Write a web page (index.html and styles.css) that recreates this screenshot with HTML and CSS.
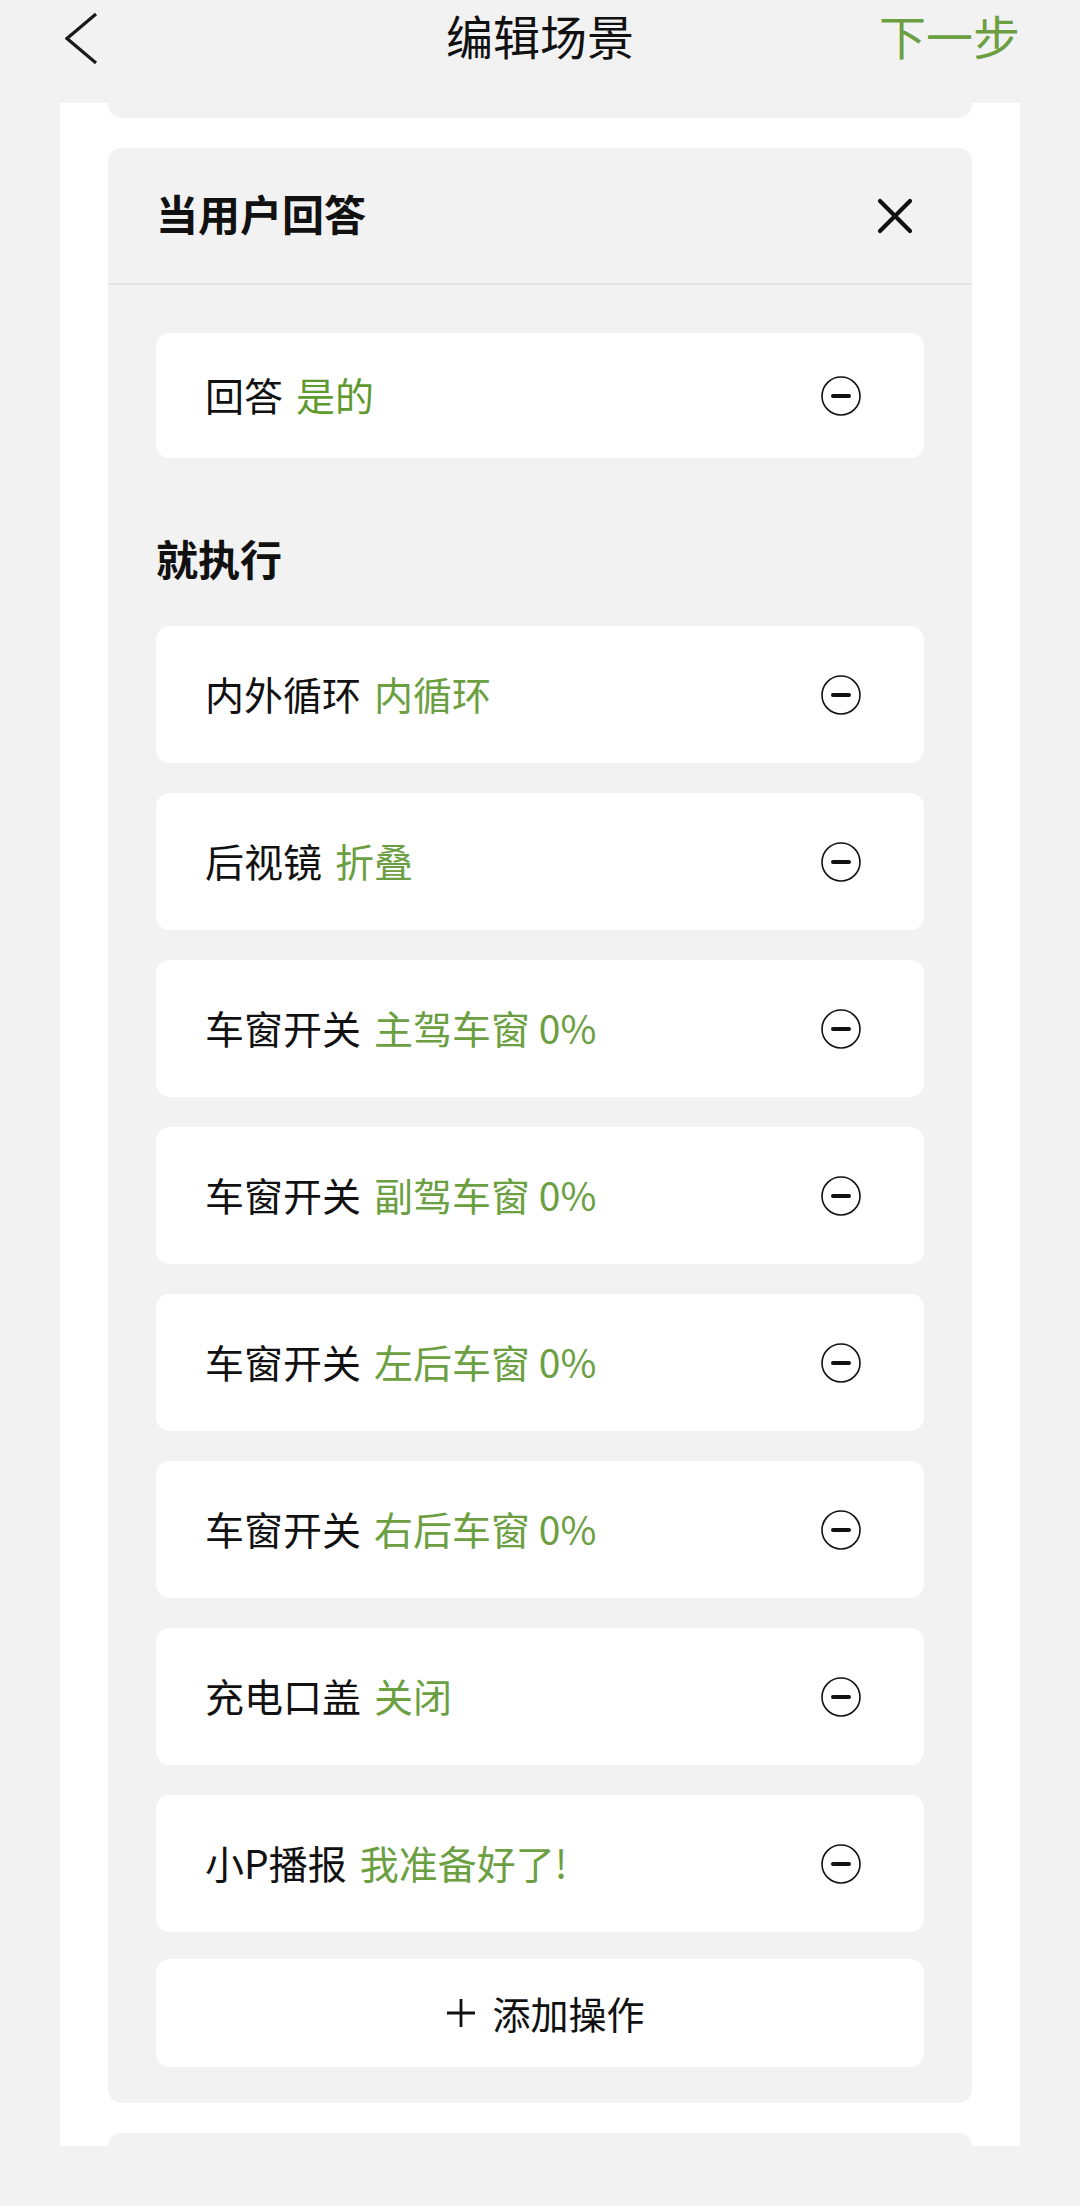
FILE: index.html
```html
<!DOCTYPE html>
<html lang="zh-CN">
<head>
<meta charset="utf-8">
<title>编辑场景</title>
<link rel="stylesheet" href="styles.css">
</head>
<body>
<div class="app">
  <header class="topbar">
    <button class="back" aria-label="返回">
      <svg width="34" height="52" viewBox="0 0 34 52"><polyline points="31,2 2,26.5 31,51" fill="none" stroke="#1a1a1a" stroke-width="3.2" stroke-linejoin="miter"/></svg>
    </button>
    <h1 class="title">编辑场景</h1>
    <a class="next">下一步</a>
  </header>

  <main class="sheet">
    <div class="stub stub-top"></div>

    <section class="scene-card">
      <div class="scene-head">
        <h2 class="scene-title">当用户回答</h2>
        <button class="close" aria-label="关闭">
          <svg width="36" height="36" viewBox="0 0 36 36"><path d="M3 3 L33 33 M33 3 L3 33" stroke="#111" stroke-width="4.2" stroke-linecap="round" fill="none"/></svg>
        </button>
      </div>

      <div class="scene-body">
        <div class="item item-answer">
          <span class="label">回答<span class="value">是的</span></span>
          <svg class="minus" width="40" height="40" viewBox="0 0 40 40"><circle cx="20" cy="20" r="19" fill="none" stroke="#111" stroke-width="1.6"/><line x1="12" y1="20" x2="28" y2="20" stroke="#111" stroke-width="4" stroke-linecap="round"/></svg>
        </div>

        <h3 class="section-title">就执行</h3>

        <div class="actions">
          <div class="item">
            <span class="label">内外循环<span class="value">内循环</span></span>
            <svg class="minus" width="40" height="40" viewBox="0 0 40 40"><circle cx="20" cy="20" r="19" fill="none" stroke="#111" stroke-width="1.6"/><line x1="12" y1="20" x2="28" y2="20" stroke="#111" stroke-width="4" stroke-linecap="round"/></svg>
          </div>
          <div class="item">
            <span class="label">后视镜<span class="value">折叠</span></span>
            <svg class="minus" width="40" height="40" viewBox="0 0 40 40"><circle cx="20" cy="20" r="19" fill="none" stroke="#111" stroke-width="1.6"/><line x1="12" y1="20" x2="28" y2="20" stroke="#111" stroke-width="4" stroke-linecap="round"/></svg>
          </div>
          <div class="item">
            <span class="label">车窗开关<span class="value">主驾车窗 0%</span></span>
            <svg class="minus" width="40" height="40" viewBox="0 0 40 40"><circle cx="20" cy="20" r="19" fill="none" stroke="#111" stroke-width="1.6"/><line x1="12" y1="20" x2="28" y2="20" stroke="#111" stroke-width="4" stroke-linecap="round"/></svg>
          </div>
          <div class="item">
            <span class="label">车窗开关<span class="value">副驾车窗 0%</span></span>
            <svg class="minus" width="40" height="40" viewBox="0 0 40 40"><circle cx="20" cy="20" r="19" fill="none" stroke="#111" stroke-width="1.6"/><line x1="12" y1="20" x2="28" y2="20" stroke="#111" stroke-width="4" stroke-linecap="round"/></svg>
          </div>
          <div class="item">
            <span class="label">车窗开关<span class="value">左后车窗 0%</span></span>
            <svg class="minus" width="40" height="40" viewBox="0 0 40 40"><circle cx="20" cy="20" r="19" fill="none" stroke="#111" stroke-width="1.6"/><line x1="12" y1="20" x2="28" y2="20" stroke="#111" stroke-width="4" stroke-linecap="round"/></svg>
          </div>
          <div class="item">
            <span class="label">车窗开关<span class="value">右后车窗 0%</span></span>
            <svg class="minus" width="40" height="40" viewBox="0 0 40 40"><circle cx="20" cy="20" r="19" fill="none" stroke="#111" stroke-width="1.6"/><line x1="12" y1="20" x2="28" y2="20" stroke="#111" stroke-width="4" stroke-linecap="round"/></svg>
          </div>
          <div class="item">
            <span class="label">充电口盖<span class="value">关闭</span></span>
            <svg class="minus" width="40" height="40" viewBox="0 0 40 40"><circle cx="20" cy="20" r="19" fill="none" stroke="#111" stroke-width="1.6"/><line x1="12" y1="20" x2="28" y2="20" stroke="#111" stroke-width="4" stroke-linecap="round"/></svg>
          </div>
          <div class="item">
            <span class="label">小P播报<span class="value">我准备好了!</span></span>
            <svg class="minus" width="40" height="40" viewBox="0 0 40 40"><circle cx="20" cy="20" r="19" fill="none" stroke="#111" stroke-width="1.6"/><line x1="12" y1="20" x2="28" y2="20" stroke="#111" stroke-width="4" stroke-linecap="round"/></svg>
          </div>
        </div>

        <button class="add">
          <svg width="28" height="28" viewBox="0 0 28 28"><path d="M14 0 V28 M0 14 H28" stroke="#111" stroke-width="2.8" fill="none"/></svg>
          <span>添加操作</span>
        </button>
      </div>
    </section>

    <div class="stub stub-bottom"></div>
  </main>
</div>
</body>
</html>
```

FILE: styles.css
```css
* { box-sizing: border-box; }

html, body {
  margin: 0;
  padding: 0;
}

body {
  background: #f2f2f2;
  font-family: "Noto Sans CJK SC", "Noto Sans", sans-serif;
  color: #111;
  width: 1080px;
  height: 2206px;
  overflow: hidden;
}

.app {
  width: 1080px;
}

/* ---------- top bar ---------- */
.topbar {
  height: 103px;
  display: grid;
  grid-template-columns: 1fr auto 1fr;
  align-items: start;
}

.back {
  justify-self: start;
  margin: 12px 0 0 65px;
  padding: 0;
  border: 0;
  background: none;
  display: flex;
}

.title {
  margin: 0;
  font-size: 47px;
  font-weight: 400;
  line-height: 70px;
  color: #111;
}

.next {
  justify-self: end;
  margin-right: 60px;
  font-size: 47px;
  line-height: 70px;
  color: #6b9f42;
}

/* ---------- white sheet ---------- */
.sheet {
  margin: 0 60px;
  background: #fff;
  padding: 0 48px;
  overflow: hidden;
}

.stub {
  background: #f2f2f2;
}

.stub-top {
  height: 15px;
  border-radius: 0 0 14px 14px;
}

.stub-bottom {
  height: 13px;
  margin-top: 30px;
  border-radius: 14px 14px 0 0;
}

/* ---------- scene card ---------- */
.scene-card {
  margin-top: 30px;
  background: #f2f2f2;
  border-radius: 14px;
}

.scene-head {
  height: 137px;
  display: flex;
  align-items: center;
  justify-content: space-between;
  padding: 0 59px 0 48px;
  border-bottom: 2px solid #e4e4e4;
}

.scene-title {
  margin: 0 0 5px;
  font-size: 42px;
  font-weight: 700;
  line-height: 56px;
}

.close {
  padding: 0;
  border: 0;
  background: none;
  display: flex;
}

.scene-body {
  padding: 48px 48px 36px;
}

.item {
  height: 137px;
  background: #fff;
  border-radius: 14px;
  display: flex;
  align-items: center;
  justify-content: space-between;
  padding: 0 63px 0 49px;
}

.item-answer {
  height: 125px;
}

.label {
  font-size: 39px;
  line-height: 50px;
  color: #111;
  white-space: nowrap;
  margin-bottom: 4px;
}

.value {
  margin-left: 13px;
  color: #6b9f42;
}

.item-answer .value {
  color: #5f9a2e;
}

.minus {
  flex: none;
  display: block;
}

.section-title {
  margin: 71px 0 39px;
  font-size: 42px;
  font-weight: 700;
  line-height: 58px;
  color: #111;
}

.actions {
  display: flex;
  flex-direction: column;
  gap: 30px;
}

.add {
  margin-top: 27px;
  width: 100%;
  height: 108px;
  border: 0;
  border-radius: 14px;
  background: #fff;
  display: flex;
  align-items: center;
  justify-content: center;
  gap: 17px;
  font-family: inherit;
  font-size: 38px;
  color: #111;
  padding: 0 0 0 12px;
}

.add span {
  line-height: 50px;
}

.add svg {
  display: block;
}
```
